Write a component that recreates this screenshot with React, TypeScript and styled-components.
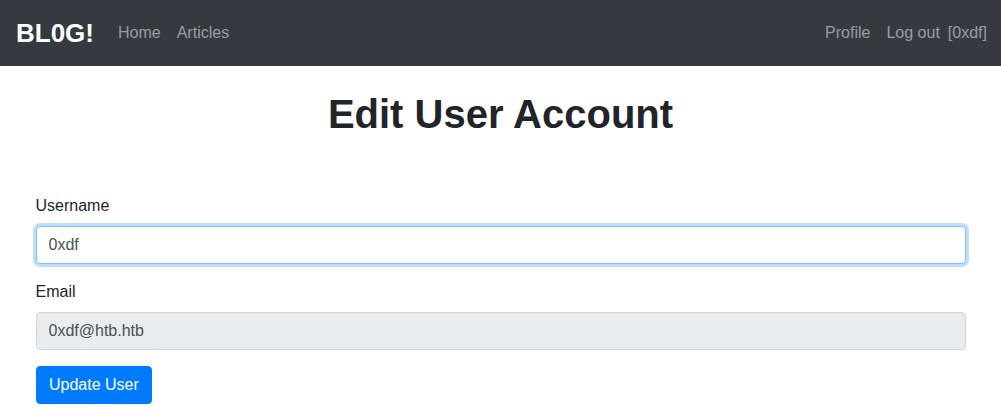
import React from "react";
import styled, { createGlobalStyle } from "styled-components";

const Global = createGlobalStyle`
  * { box-sizing: border-box; }
  html, body { margin: 0; padding: 0; background: #fff; }
  body {
    font-family: "Liberation Sans", Arial, sans-serif;
    font-size: 16px;
    line-height: 1.5;
    color: #212529;
  }
`;

const Navbar = styled.nav`
  height: 66px;
  background: #343a40;
  display: flex;
  align-items: center;
  padding: 0 14px 0 16px;
`;

const Brand = styled.a`
  font-size: 26px;
  font-weight: 700;
  color: #fff;
  margin-right: 16px;
  text-decoration: none;
  line-height: 1.5;
`;

const NavGroup = styled.div<{ $right?: boolean }>`
  display: flex;
  align-items: center;
  margin-left: ${(p) => (p.$right ? "auto" : "0")};
`;

const NavLink = styled.a`
  color: rgba(255, 255, 255, 0.5);
  padding: 8px 8px;
  text-decoration: none;
  font-size: 16px;
`;

const NavText = styled.span`
  color: rgba(255, 255, 255, 0.5);
  font-size: 16px;
  padding: 8px 0;
`;

const Container = styled.main`
  width: 960px;
  margin: 0 auto;
  padding: 0 15px;
`;

const Title = styled.h1`
  font-size: 40px;
  font-weight: 700;
  line-height: 1.2;
  text-align: center;
  margin: 24px 0 56px;
`;

const FormGroup = styled.div`
  margin-bottom: 16px;
`;

const Label = styled.label`
  display: block;
  margin-bottom: 8px;
  font-size: 16px;
  line-height: 24px;
`;

const Input = styled.input<{ $focused?: boolean }>`
  display: block;
  width: 100%;
  height: 38px;
  padding: 6px 12px;
  font-family: inherit;
  font-size: 16px;
  line-height: 1.5;
  color: #495057;
  background: #fff;
  border: 1px solid ${(p) => (p.$focused ? "#80bdff" : "#ced4da")};
  border-radius: 4px;
  outline: none;
  box-shadow: ${(p) => (p.$focused ? "0 0 0 3px rgba(0,123,255,.25)" : "none")};
  &:disabled {
    background: #e9ecef;
    opacity: 1;
    color: #495057;
  }
`;

const Button = styled.button`
  display: inline-block;
  height: 38px;
  padding: 6px 12.5px;
  font-family: inherit;
  font-size: 16px;
  line-height: 1.5;
  color: #fff;
  background: #007bff;
  border: 1px solid #007bff;
  border-radius: 4px;
  cursor: pointer;
`;

export default function App() {
  return (
    <>
      <Global />
      <Navbar>
        <Brand href="#">BL0G!</Brand>
        <NavGroup>
          <NavLink href="#">Home</NavLink>
          <NavLink href="#">Articles</NavLink>
        </NavGroup>
        <NavGroup $right>
          <NavLink href="#">Profile</NavLink>
          <NavLink href="#">Log out</NavLink>
          <NavText>[0xdf]</NavText>
        </NavGroup>
      </Navbar>
      <Container>
        <Title>Edit User Account</Title>
        <form onSubmit={(e) => e.preventDefault()}>
          <FormGroup>
            <Label htmlFor="username">Username</Label>
            <Input id="username" $focused defaultValue="0xdf" />
          </FormGroup>
          <FormGroup>
            <Label htmlFor="email">Email</Label>
            <Input id="email" disabled defaultValue="0xdf@htb.htb" />
          </FormGroup>
          <Button type="submit">Update User</Button>
        </form>
      </Container>
    </>
  );
}
